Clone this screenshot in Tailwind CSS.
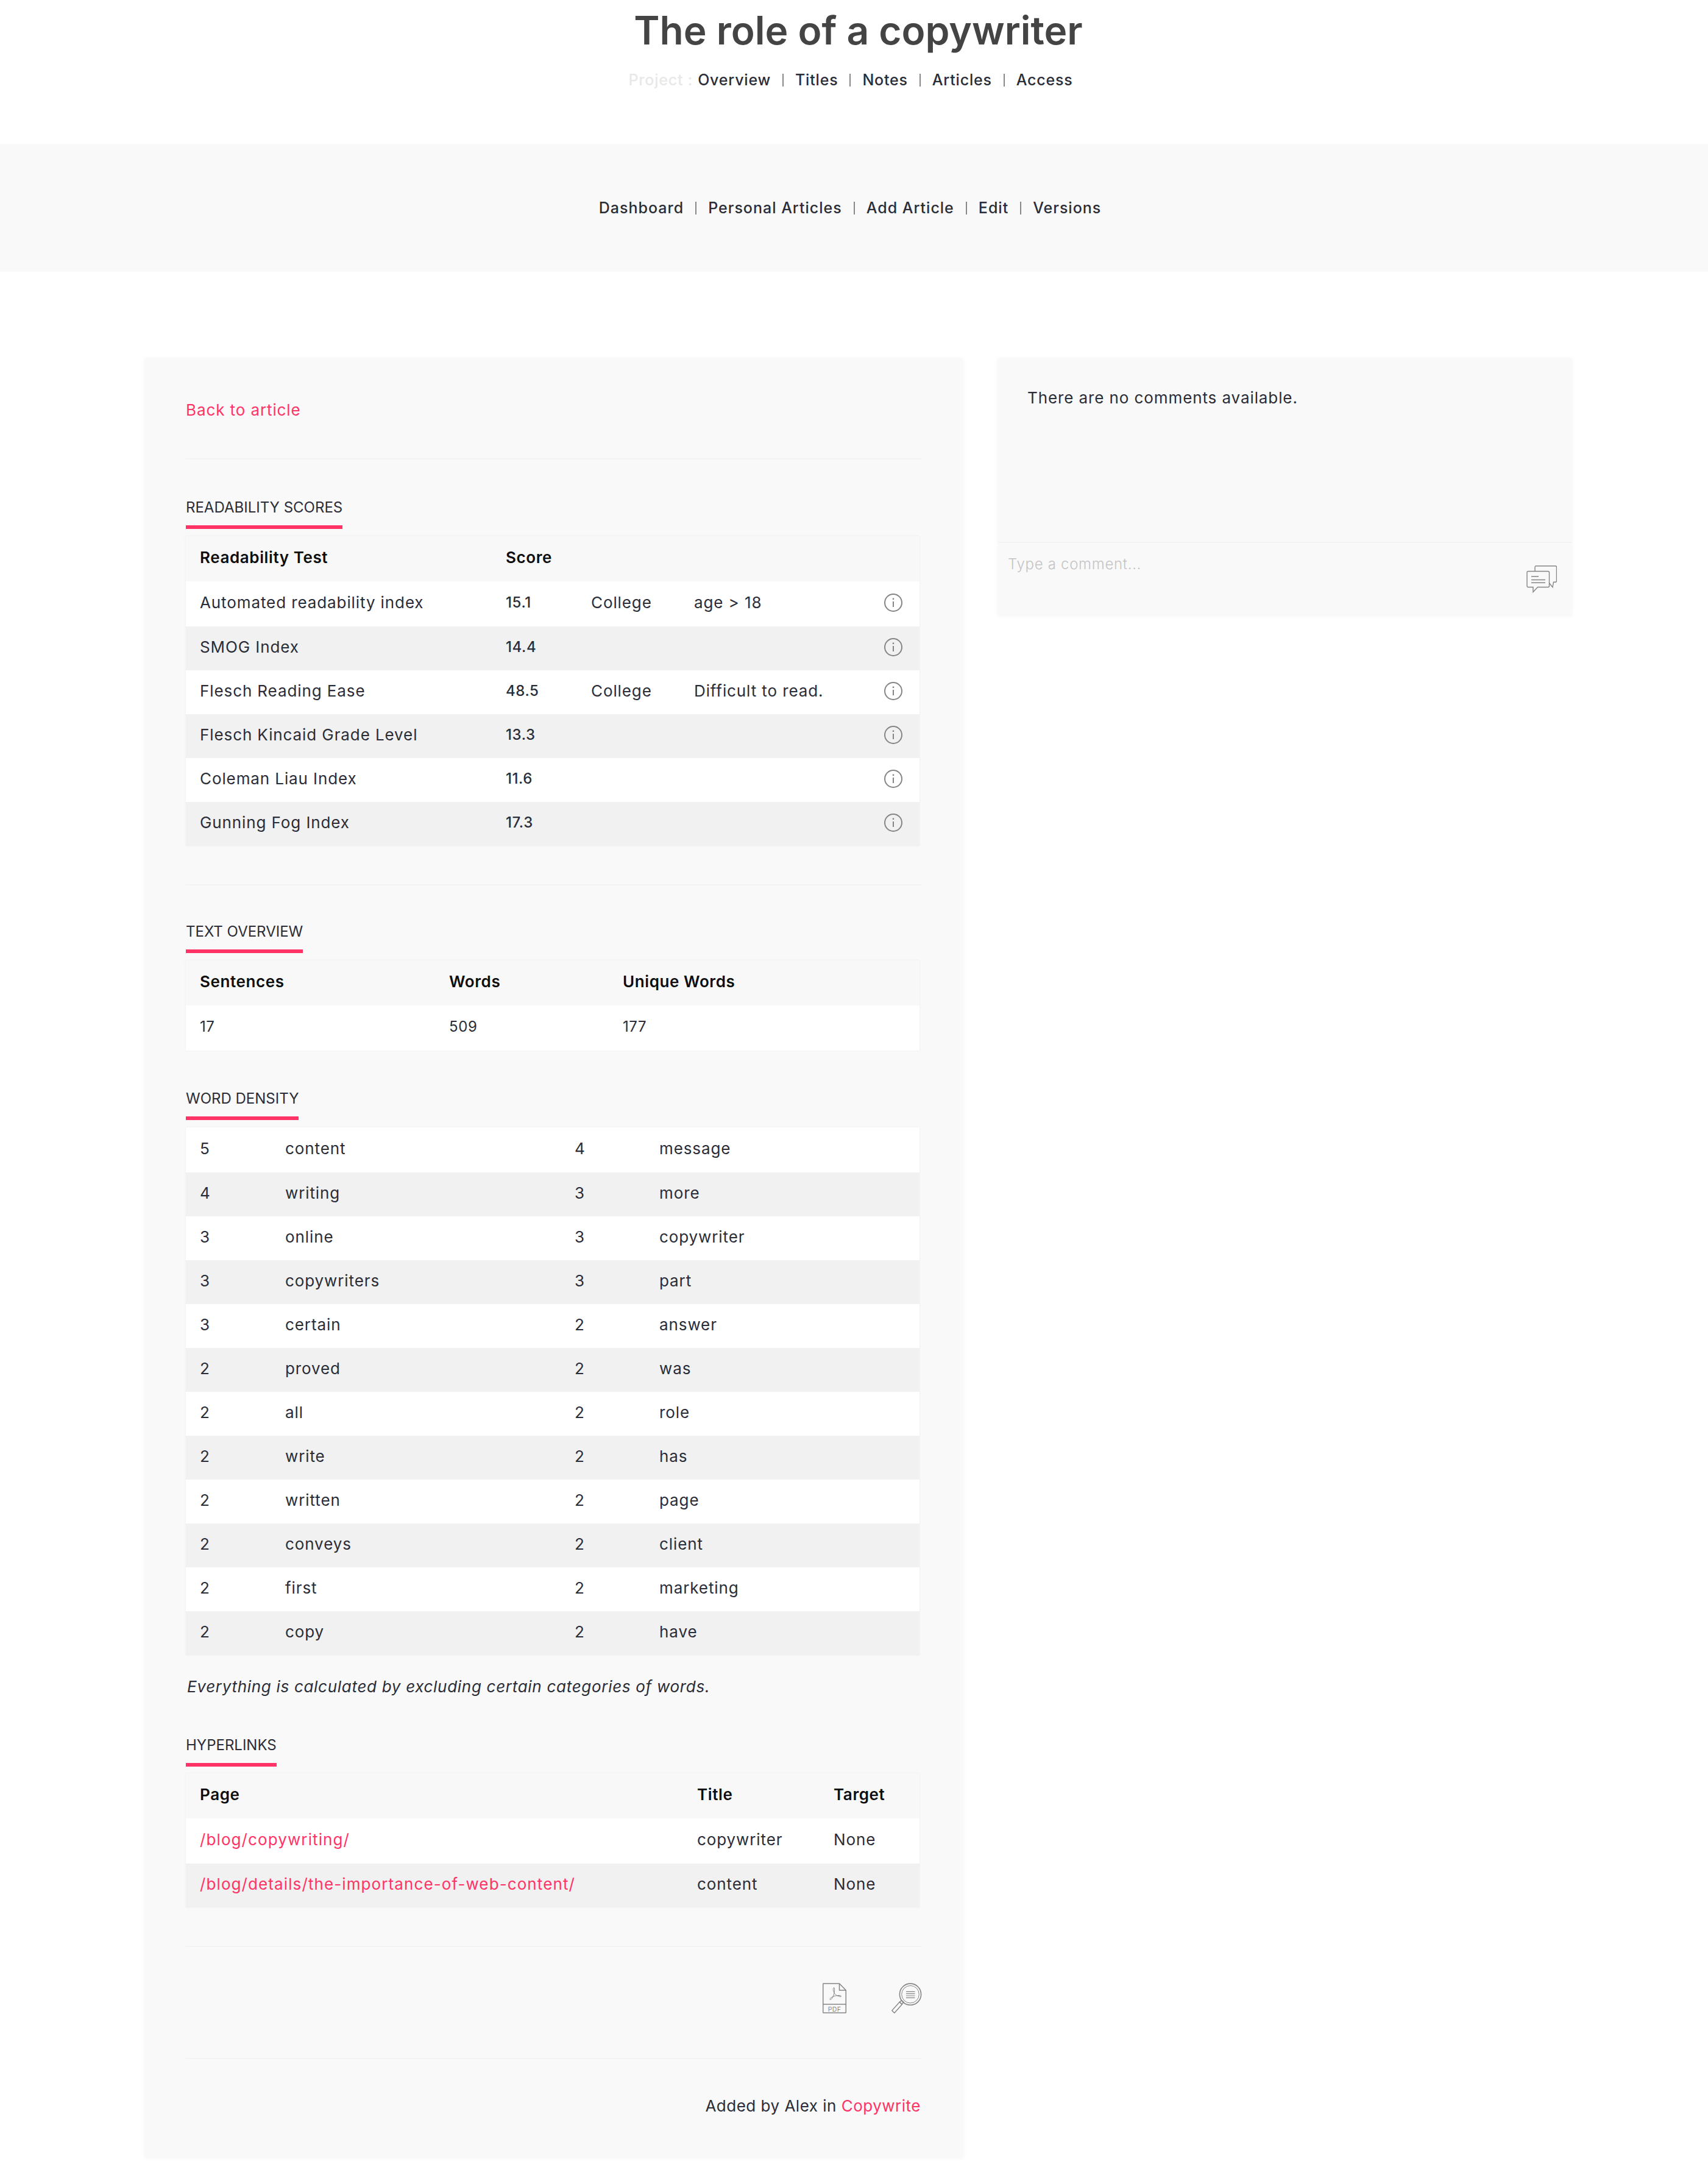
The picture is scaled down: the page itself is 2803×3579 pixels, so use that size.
<!doctype html>
<html lang="en">
<head>
<meta charset="UTF-8" />
<title>The role of a copywriter</title>
<script src="https://cdn.jsdelivr.net/npm/@tailwindcss/browser@4"></script>
</head>
<body class="bg-white text-[#2a2d38] font-['Inter',sans-serif] text-[26px] leading-[36px] tracking-[0.9px] font-normal">
  <!-- project header -->
  <header class="h-[236px] pt-[13px] flex flex-col items-center">
    <h1 class="pl-[14px] text-[64px] leading-[74px] font-semibold tracking-[0px] text-[#444444]">The role of a copywriter</h1>
    <nav class="mt-[26px] pr-[11px] flex items-center gap-[19px] text-[25px] tracking-[0.8px] font-medium">
      <span class="text-[#e8e8e8] -mr-[11px]">Project :</span>
      <a href="#">Overview</a><span class="w-[2px] h-[21px] bg-[#888888]"></span>
      <a href="#">Titles</a><span class="w-[2px] h-[21px] bg-[#888888]"></span>
      <a href="#">Notes</a><span class="w-[2px] h-[21px] bg-[#888888]"></span>
      <a href="#">Articles</a><span class="w-[2px] h-[21px] bg-[#888888]"></span>
      <a href="#">Access</a>
    </nav>
  </header>

  <!-- article nav band -->
  <div class="h-[210px] bg-[#f9f9f9] flex items-center justify-center">
    <nav class="pr-[13px] flex items-center gap-[19px] text-[25px] tracking-[1px] font-medium">
      <a href="#">Dashboard</a><span class="w-[2px] h-[21px] bg-[#888888]"></span>
      <a href="#">Personal Articles</a><span class="w-[2px] h-[21px] bg-[#888888]"></span>
      <a href="#">Add Article</a><span class="w-[2px] h-[21px] bg-[#888888]"></span>
      <a href="#">Edit</a><span class="w-[2px] h-[21px] bg-[#888888]"></span>
      <a href="#">Versions</a>
    </nav>
  </div>

  <main class="pt-[142px] pl-[238px] pb-[38px] flex items-start gap-[58px]">
    <!-- left card -->
    <section class="w-[1342px] bg-[#f9f9f9] shadow-[0_0_8px_rgba(0,0,0,0.05)] pl-[67px] pr-[67px] pt-[67px] pb-[67px]">
      <a href="#" class="block text-[#ff3366]">Back to article</a>
      <div class="mt-[61px] h-[2px] bg-[#f3f3f3]"></div>

      <h2 class="mt-[64px] inline-block align-top pb-[14px] border-b-[6px] border-[#ff3366] text-[24px] leading-[30px] font-normal tracking-[0px]">READABILITY SCORES</h2>
      <table class="mt-[12px] w-[1204px] table-fixed shadow-[0_0_3px_rgba(0,0,0,0.06)] [&_td]:pb-[4px] [&_th]:pb-[4px]">
        <colgroup><col class="w-[502px]"><col class="w-[140px]"><col class="w-[169px]"><col class="w-[307px]"><col class="w-[86px]"></colgroup>
        <thead>
          <tr class="h-[74px] bg-[#f8f8f8] text-left text-[#0d0d0d] tracking-[0.6px]">
            <th class="pl-[23px] font-semibold">Readability Test</th>
            <th class="pl-[23px] font-semibold">Score</th>
            <th></th><th></th><th></th>
          </tr>
        </thead>
        <tbody>
          <tr class="h-[74px] bg-white">
            <td class="pl-[23px]">Automated readability index</td><td class="pl-[23px] font-medium text-[24px] tracking-[0.6px]">15.1</td><td class="pl-[23px]">College</td><td class="pl-[23px]">age &gt; 18</td>
            <td><svg class="mx-auto" width="30" height="30" viewBox="0 0 30 30" fill="none" stroke="#858585" stroke-width="2"><circle cx="15" cy="15" r="14"/><path d="M15 13v9"/><path d="M15 7.5v2.5" stroke-width="2.4"/></svg></td>
          </tr>
          <tr class="h-[72px] bg-[#f1f1f1]">
            <td class="pl-[23px]">SMOG Index</td><td class="pl-[23px] font-medium text-[24px] tracking-[0.6px]">14.4</td><td></td><td></td>
            <td><svg class="mx-auto" width="30" height="30" viewBox="0 0 30 30" fill="none" stroke="#858585" stroke-width="2"><circle cx="15" cy="15" r="14"/><path d="M15 13v9"/><path d="M15 7.5v2.5" stroke-width="2.4"/></svg></td>
          </tr>
          <tr class="h-[72px] bg-white">
            <td class="pl-[23px]">Flesch Reading Ease</td><td class="pl-[23px] font-medium text-[24px] tracking-[0.6px]">48.5</td><td class="pl-[23px]">College</td><td class="pl-[23px]">Difficult to read.</td>
            <td><svg class="mx-auto" width="30" height="30" viewBox="0 0 30 30" fill="none" stroke="#858585" stroke-width="2"><circle cx="15" cy="15" r="14"/><path d="M15 13v9"/><path d="M15 7.5v2.5" stroke-width="2.4"/></svg></td>
          </tr>
          <tr class="h-[72px] bg-[#f1f1f1]">
            <td class="pl-[23px]">Flesch Kincaid Grade Level</td><td class="pl-[23px] font-medium text-[24px] tracking-[0.6px]">13.3</td><td></td><td></td>
            <td><svg class="mx-auto" width="30" height="30" viewBox="0 0 30 30" fill="none" stroke="#858585" stroke-width="2"><circle cx="15" cy="15" r="14"/><path d="M15 13v9"/><path d="M15 7.5v2.5" stroke-width="2.4"/></svg></td>
          </tr>
          <tr class="h-[72px] bg-white">
            <td class="pl-[23px]">Coleman Liau Index</td><td class="pl-[23px] font-medium text-[24px] tracking-[0.6px]">11.6</td><td></td><td></td>
            <td><svg class="mx-auto" width="30" height="30" viewBox="0 0 30 30" fill="none" stroke="#858585" stroke-width="2"><circle cx="15" cy="15" r="14"/><path d="M15 13v9"/><path d="M15 7.5v2.5" stroke-width="2.4"/></svg></td>
          </tr>
          <tr class="h-[72px] bg-[#f1f1f1]">
            <td class="pl-[23px]">Gunning Fog Index</td><td class="pl-[23px] font-medium text-[24px] tracking-[0.6px]">17.3</td><td></td><td></td>
            <td><svg class="mx-auto" width="30" height="30" viewBox="0 0 30 30" fill="none" stroke="#858585" stroke-width="2"><circle cx="15" cy="15" r="14"/><path d="M15 13v9"/><path d="M15 7.5v2.5" stroke-width="2.4"/></svg></td>
          </tr>
        </tbody>
      </table>
      <div class="mt-[63px] h-[2px] bg-[#f3f3f3]"></div>

      <h2 class="mt-[61px] inline-block align-top pb-[14px] border-b-[6px] border-[#ff3366] text-[24px] leading-[30px] font-normal tracking-[0px]">TEXT OVERVIEW</h2>
      <table class="mt-[12px] w-[1204px] table-fixed shadow-[0_0_3px_rgba(0,0,0,0.06)] [&_td]:pb-[4px] [&_th]:pb-[4px]">
        <colgroup><col class="w-[409px]"><col class="w-[285px]"><col class="w-[510px]"></colgroup>
        <thead>
          <tr class="h-[74px] bg-[#f8f8f8] text-left text-[#0d0d0d] tracking-[0.6px]">
            <th class="pl-[23px] font-semibold">Sentences</th><th class="pl-[23px] font-semibold">Words</th><th class="pl-[23px] font-semibold">Unique Words</th>
          </tr>
        </thead>
        <tbody>
          <tr class="h-[74px] bg-white text-[24px] tracking-[0.6px]"><td class="pl-[23px]">17</td><td class="pl-[23px]">509</td><td class="pl-[23px]">177</td></tr>
        </tbody>
      </table>

      <h2 class="mt-[64px] inline-block align-top pb-[14px] border-b-[6px] border-[#ff3366] text-[24px] leading-[30px] font-normal tracking-[0px]">WORD DENSITY</h2>
      <table class="mt-[12px] w-[1204px] table-fixed shadow-[0_0_3px_rgba(0,0,0,0.06)] [&_td]:pb-[4px]">
        <colgroup><col class="w-[140px]"><col class="w-[475px]"><col class="w-[139px]"><col class="w-[450px]"></colgroup>
        <tbody>
          <tr class="h-[74px] bg-white"><td class="pl-[23px]">5</td><td class="pl-[23px]">content</td><td class="pl-[23px]">4</td><td class="pl-[23px]">message</td></tr>
          <tr class="h-[72px] bg-[#f1f1f1]"><td class="pl-[23px]">4</td><td class="pl-[23px]">writing</td><td class="pl-[23px]">3</td><td class="pl-[23px]">more</td></tr>
          <tr class="h-[72px] bg-white"><td class="pl-[23px]">3</td><td class="pl-[23px]">online</td><td class="pl-[23px]">3</td><td class="pl-[23px]">copywriter</td></tr>
          <tr class="h-[72px] bg-[#f1f1f1]"><td class="pl-[23px]">3</td><td class="pl-[23px]">copywriters</td><td class="pl-[23px]">3</td><td class="pl-[23px]">part</td></tr>
          <tr class="h-[72px] bg-white"><td class="pl-[23px]">3</td><td class="pl-[23px]">certain</td><td class="pl-[23px]">2</td><td class="pl-[23px]">answer</td></tr>
          <tr class="h-[72px] bg-[#f1f1f1]"><td class="pl-[23px]">2</td><td class="pl-[23px]">proved</td><td class="pl-[23px]">2</td><td class="pl-[23px]">was</td></tr>
          <tr class="h-[72px] bg-white"><td class="pl-[23px]">2</td><td class="pl-[23px]">all</td><td class="pl-[23px]">2</td><td class="pl-[23px]">role</td></tr>
          <tr class="h-[72px] bg-[#f1f1f1]"><td class="pl-[23px]">2</td><td class="pl-[23px]">write</td><td class="pl-[23px]">2</td><td class="pl-[23px]">has</td></tr>
          <tr class="h-[72px] bg-white"><td class="pl-[23px]">2</td><td class="pl-[23px]">written</td><td class="pl-[23px]">2</td><td class="pl-[23px]">page</td></tr>
          <tr class="h-[72px] bg-[#f1f1f1]"><td class="pl-[23px]">2</td><td class="pl-[23px]">conveys</td><td class="pl-[23px]">2</td><td class="pl-[23px]">client</td></tr>
          <tr class="h-[72px] bg-white"><td class="pl-[23px]">2</td><td class="pl-[23px]">first</td><td class="pl-[23px]">2</td><td class="pl-[23px]">marketing</td></tr>
          <tr class="h-[72px] bg-[#f1f1f1]"><td class="pl-[23px]">2</td><td class="pl-[23px]">copy</td><td class="pl-[23px]">2</td><td class="pl-[23px]">have</td></tr>
        </tbody>
      </table>
      <p class="mt-[34px] pl-[2px] italic tracking-[0.7px]">Everything is calculated by excluding certain categories of words.</p>

      <h2 class="mt-[63px] inline-block align-top pb-[14px] border-b-[6px] border-[#ff3366] text-[24px] leading-[30px] font-normal tracking-[0px]">HYPERLINKS</h2>
      <table class="mt-[11px] w-[1204px] table-fixed shadow-[0_0_3px_rgba(0,0,0,0.06)] [&_td]:pb-[4px] [&_th]:pb-[4px]">
        <colgroup><col class="w-[816px]"><col class="w-[224px]"><col class="w-[164px]"></colgroup>
        <thead>
          <tr class="h-[74px] bg-[#f8f8f8] text-left text-[#0d0d0d] tracking-[0.6px]">
            <th class="pl-[23px] font-semibold">Page</th><th class="pl-[23px] font-semibold">Title</th><th class="pl-[23px] font-semibold">Target</th>
          </tr>
        </thead>
        <tbody>
          <tr class="h-[74px] bg-white"><td class="pl-[23px]"><a href="#" class="text-[#ff3366] tracking-[1.1px]">/blog/copywriting/</a></td><td class="pl-[23px]">copywriter</td><td class="pl-[23px]">None</td></tr>
          <tr class="h-[72px] bg-[#f1f1f1]"><td class="pl-[23px]"><a href="#" class="text-[#ff3366] tracking-[1.1px]">/blog/details/the-importance-of-web-content/</a></td><td class="pl-[23px]">content</td><td class="pl-[23px]">None</td></tr>
        </tbody>
      </table>
      <div class="mt-[63px] w-[1208px] h-[2px] bg-[#f3f3f3]"></div>

      <div class="mt-[59px] w-[1208px] flex justify-end items-start gap-[74px]">
        <a href="#" aria-label="PDF">
          <svg class="block" width="39" height="50" viewBox="0 0 39 50" fill="none" stroke="#858585" stroke-width="1.500">
            <path d="M1.500 1h26L38.300 12v36.200a.8.8 0 0 1-.8.8H1.500a.8.8 0 0 1-.8-.8V1.800a.8.8 0 0 1 .8-.8z"/>
            <path d="M27.500 1v11h10.800"/>
            <path d="M1 35h37"/>
            <path d="M18.500 8c-1.500 0-1.500 3-.5 6c1.500 5 5 7 11 8.500c2 .3 2-1.500 0-1.800c-5-.8-12 1-16 4c-2 2-1 3.500 .5 2.500c3-2.500 6-9 6-15c0-3 0-4.500-1-4.500z" stroke-width="1"/>
            <text x="19.500" y="46.500" text-anchor="middle" font-size="10.500" letter-spacing="0.4" fill="#858585" stroke="none" font-family="Inter, sans-serif">PDF</text>
          </svg>
        </a>
        <a href="#" aria-label="Preview">
          <svg class="block" width="50" height="50" viewBox="0 0 50 50" fill="none" stroke="#858585">
            <circle cx="31" cy="18.700" r="17.600" stroke-width="1.600"/>
            <circle cx="31" cy="18.700" r="14.300" stroke-width="1"/>
            <path d="M24 14.300h14.500M24 17.700h14.500M24 21h14.500M24 24.300h14.500" stroke-width="1.200"/>
            <path d="M.8 45.300l4 4 12.500-14-4-4z" stroke-width="1.400"/>
            <path d="M13.500 31.500l3-3 3.500 3-3 3.500z" stroke-width="1.400"/>
          </svg>
        </a>
      </div>
      <div class="mt-[73px] w-[1208px] h-[2px] bg-[#f3f3f3]"></div>

      <p class="mt-[59px] w-[1206px] text-right tracking-[0.5px]">Added by Alex in <a href="#" class="text-[#ff3366]">Copywrite</a></p>
    </section>

    <!-- comments -->
    <aside class="w-[941px] h-[422px] bg-[#f9f9f9] shadow-[0_0_8px_rgba(0,0,0,0.05)] flex flex-col">
      <div class="h-[303px] pt-[47px] pl-[48px] border-b-2 border-[#f3f3f3]">There are no comments available.</div>
      <div class="flex-1 relative pt-[17px] pl-[16px] text-[24px] tracking-[0.7px] font-light text-[#c4c4c4]">
        Type a comment...
        <svg class="absolute right-[24px] top-[37px]" width="50" height="45" viewBox="0 0 50 45" fill="none" stroke="#858585" stroke-width="1.400">
          <path d="M14 9V2.500A2 2 0 0 1 16 .8h32a2 2 0 0 1 1.500 1.700v23a2 2 0 0 1-1.500 1.700h-3.500l-1.500 8.500-5.500-7"/>
          <path d="M3 9.500h32.500a2 2 0 0 1 2 2v22a2 2 0 0 1-2 2H18.500L11 43.500v-8H3a2 2 0 0 1-2-2v-22a2 2 0 0 1 2-2z" fill="#f9f9f9"/>
          <path d="M8 18h12M8 23.500h23M8 28.200h23" stroke-width="1.500"/>
        </svg>
      </div>
    </aside>
  </main>
</body>
</html>
